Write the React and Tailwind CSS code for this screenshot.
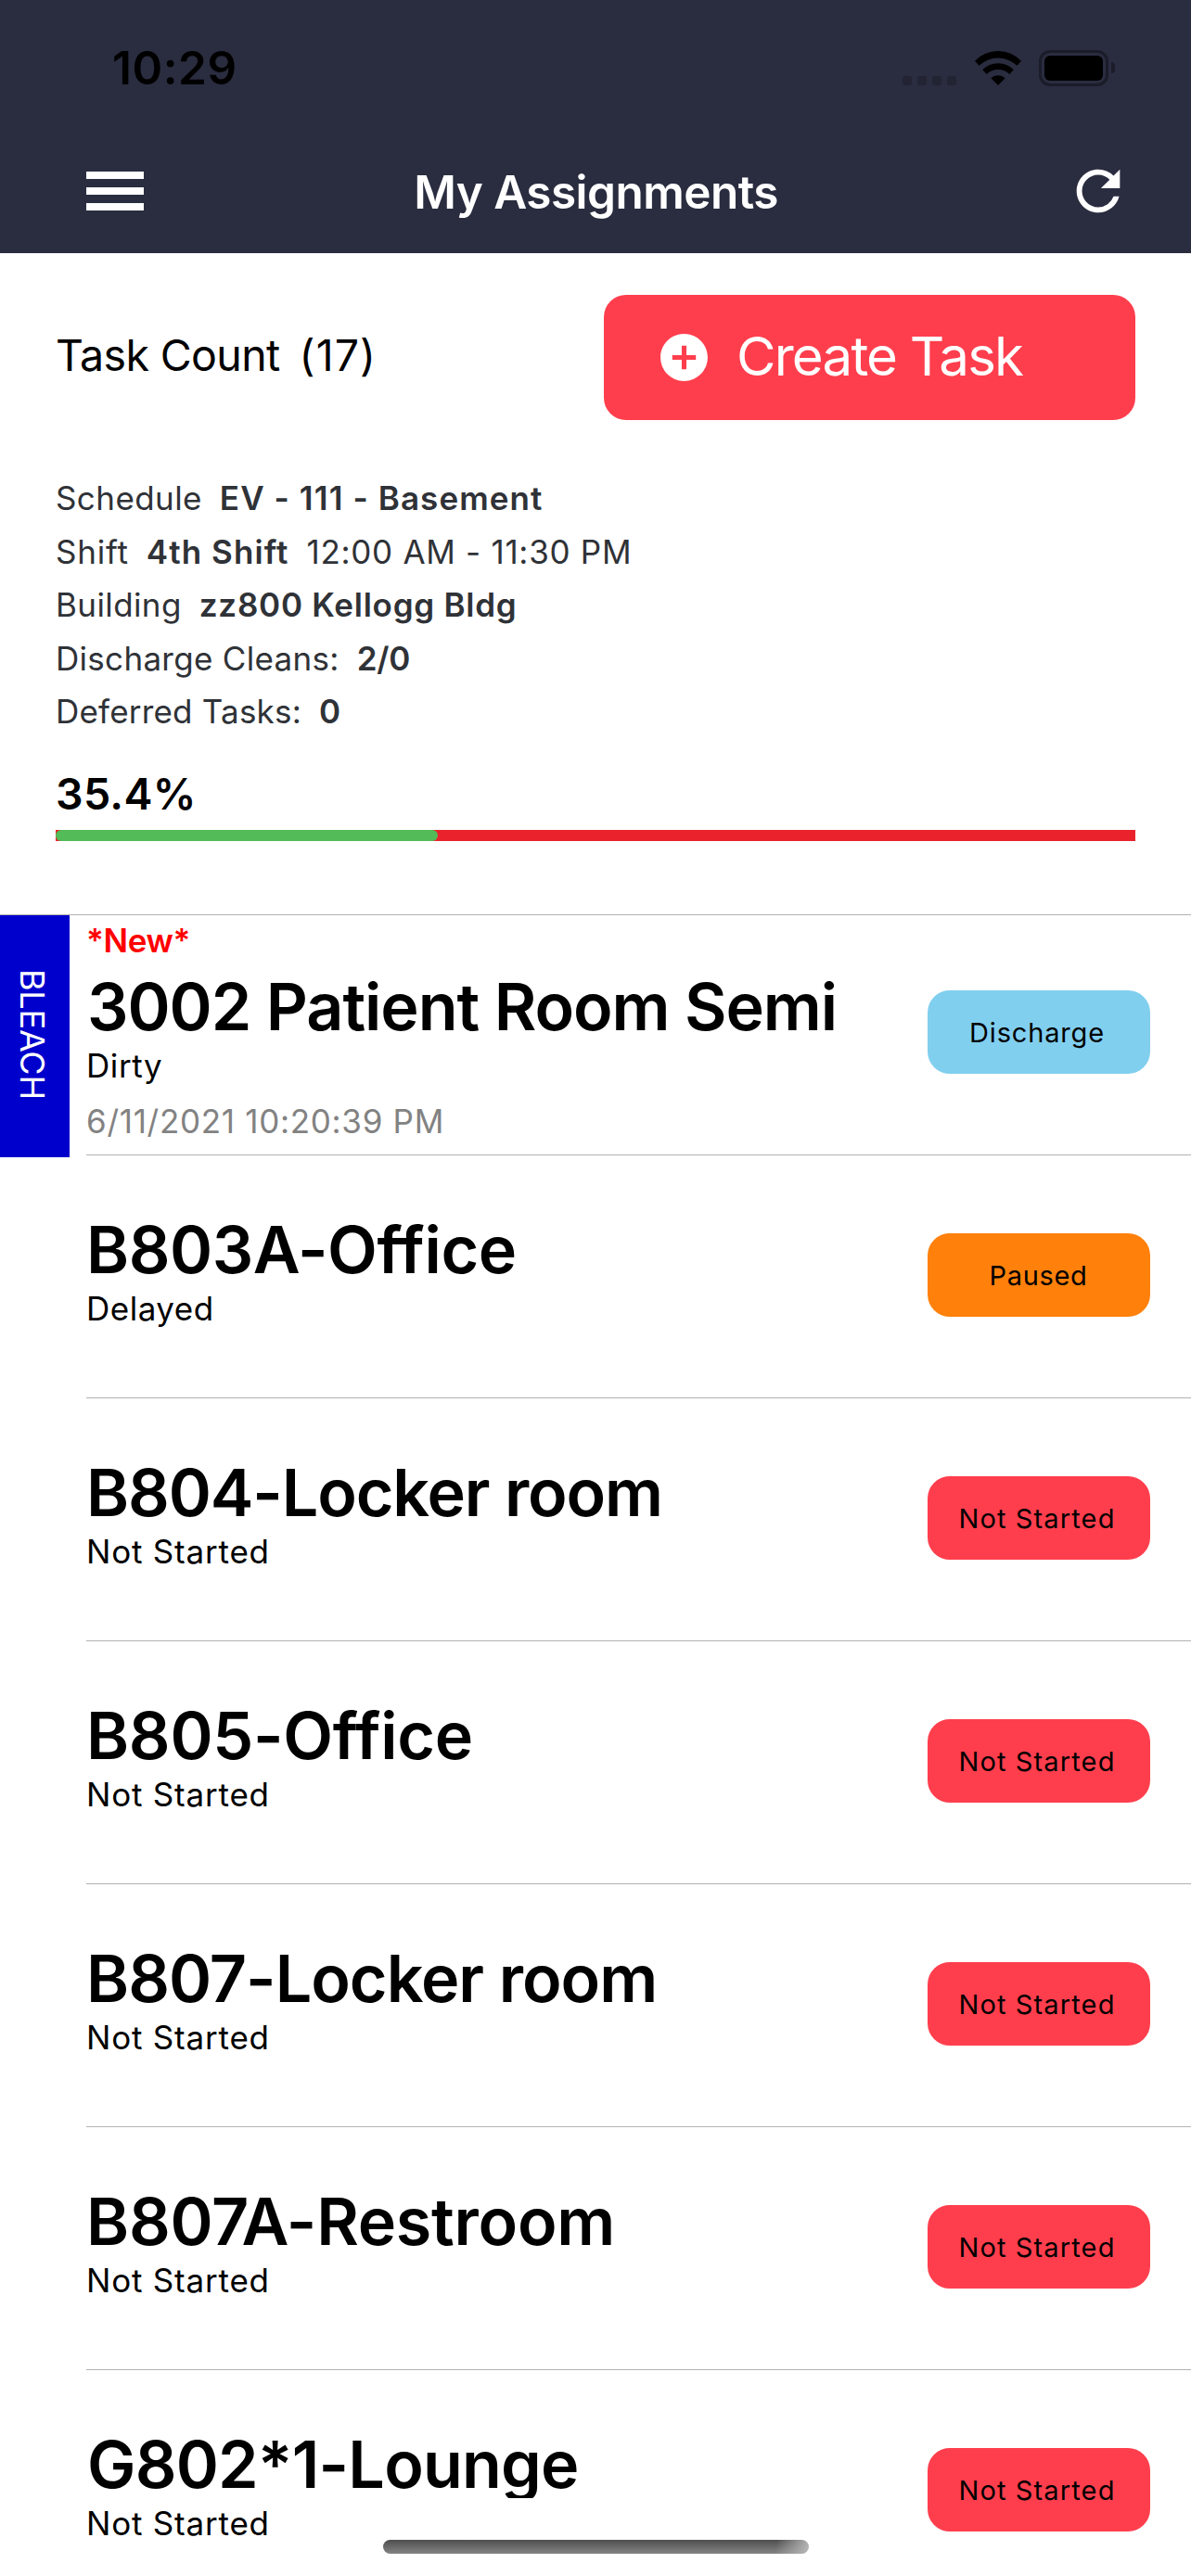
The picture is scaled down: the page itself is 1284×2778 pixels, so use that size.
import React from "react";
import { MdAddCircle, MdRefresh } from "react-icons/md";

const info = [
  [
    { text: "Schedule", style: "tracking-[0.41px]" },
    { text: "EV - 111 - Basement", style: "font-semibold tracking-[1.09px]" },
  ],
  [
    { text: "Shift", style: "tracking-[0.78px]" },
    { text: "4th Shift", style: "font-semibold tracking-[1.08px]" },
    { text: "12:00 AM - 11:30 PM", style: "tracking-[0.71px]" },
  ],
  [
    { text: "Building", style: "tracking-[0.4px]" },
    { text: "zz800 Kellogg Bldg", style: "font-semibold tracking-[0.75px]" },
  ],
  [
    { text: "Discharge Cleans:", style: "tracking-[0.3px]" },
    { text: "2/0", style: "font-semibold tracking-[-0.2px]" },
  ],
  [
    { text: "Deferred Tasks:", style: "tracking-[0.2px]" },
    { text: "0", style: "font-semibold" },
  ],
];

const badges = {
  Discharge: "bg-[#81cfef] tracking-[0.82px] pr-[4px]",
  Paused: "bg-[#ff800b] tracking-[0.68px] pr-px",
  "Not Started": "bg-[#ff3e4d] tracking-[1.13px] pr-[4px]",
};

const tasks = [
  {
    name: "3002 Patient Room Semi",
    tracking: "tracking-[-1.06px] pl-px",
    status: "Dirty",
    statusTracking: "tracking-[0.6px]",
    badge: "Discharge",
    isNew: true,
    time: "6/11/2021 10:20:39 PM",
    tag: "BLEACH",
  },
  { name: "B803A-Office", tracking: "tracking-[-0.45px]", status: "Delayed", statusTracking: "tracking-[0.5px]", badge: "Paused" },
  { name: "B804-Locker room", tracking: "tracking-[-1.12px]", status: "Not Started", badge: "Not Started" },
  { name: "B805-Office", tracking: "tracking-[-0.28px]", status: "Not Started", badge: "Not Started" },
  { name: "B807-Locker room", tracking: "tracking-[-1px]", status: "Not Started", badge: "Not Started" },
  { name: "B807A-Restroom", tracking: "tracking-[-0.25px]", status: "Not Started", badge: "Not Started" },
  { name: "G802*1-Lounge", tracking: "tracking-[-0.8px] overflow-hidden pl-px", status: "Not Started", badge: "Not Started" },
];

function StatusBar() {
  return (
    <div className="flex h-[146px] items-center justify-between pl-[121px] pr-[82px]">
      <span className="text-[49.5px] leading-[60px] font-semibold tracking-[0.57px] text-black">10:29</span>
      <div className="flex h-[39px] items-center">
        <div className="mt-[27px] flex gap-[6px]">
          {[0, 1, 2, 3].map((dot) => (
            <span key={dot} className="size-[10px] rounded-[3px] bg-[#222333]" />
          ))}
        </div>
        <svg className="ml-[20px] h-[37px] w-[50px]" viewBox="0 0 50 37" fill="#000">
          <path d="M0 10.7A34.6 34.6 0 0 1 50 10.7L45.5 15.7A30 30 0 0 0 4.5 15.7Z" />
          <path d="M8.2 20.2A23.7 23.7 0 0 1 41.8 20.2L37.3 25.1A17.6 17.6 0 0 0 12.7 25.1Z" />
          <path d="M17.4 29.2A11 11 0 0 1 32.6 29.2L25 37Z" />
        </svg>
        <div className="ml-[19px] flex h-[39px] w-[75px] rounded-[12px] border-[3px] border-[#1b1c2a] p-[3px]">
          <div className="flex-1 rounded-[6px] bg-black" />
        </div>
        <div className="ml-[3px] h-[12px] w-[4px] rounded-r-[4px] bg-[#1b1c2a]" />
      </div>
    </div>
  );
}

function NavBar() {
  return (
    <div className="flex h-[122px] items-center justify-between pl-[93px] pr-[65px]">
      <div className="flex w-[97px] flex-col gap-[9.6px] pb-[2px]">
        <span className="h-[7.6px] w-[62px] bg-white" />
        <span className="h-[7.6px] w-[62px] bg-white" />
        <span className="h-[7.6px] w-[62px] bg-white" />
      </div>
      <h1 className="pl-[1px] text-[49.5px] leading-[60px] font-semibold tracking-[-0.55px] text-white">My Assignments</h1>
      <div className="flex w-[125px] justify-end pb-[3px]">
        <MdRefresh className="size-[70px] text-white" />
      </div>
    </div>
  );
}

function Summary() {
  return (
    <section className="h-[711px] px-[60px] pt-[45px]">
      <div className="flex h-[135px] items-center justify-between">
        <div className="flex gap-[21px] pb-[5px] text-[46.5px] leading-[56px] text-black">
          <span className="tracking-[-0.63px]">Task Count</span>
          <span className="tracking-[1.1px]">(17)</span>
        </div>
        <button className="flex h-[135px] w-[573px] items-center gap-[26px] rounded-[24px] bg-[#ff3e4d] pl-[56px] text-white">
          <MdAddCircle className="size-[61px]" />
          <span className="pb-[3px] text-[58.2px] leading-[70px] tracking-[-1.8px]">Create Task</span>
        </button>
      </div>
      <div className="mt-[56px] text-[35px] leading-[57.6px] text-[#2f3237]">
        {info.map((line) => (
          <div key={line[0].text} className="flex gap-[19px]">
            {line.map((part) => (
              <span key={part.text} className={part.style}>
                {part.text}
              </span>
            ))}
          </div>
        ))}
      </div>
      <div className="mt-[29px] text-[46.5px] leading-[60px] font-semibold tracking-[0.33px] text-black">35.4%</div>
      <div className="mt-[9px] h-[12px] bg-[#e9222c]">
        <div className="h-full rounded-[6px] bg-[#53bb57]" style={{ width: "35.4%" }} />
      </div>
    </section>
  );
}

function TaskRow({ task }) {
  return (
    <li className="flex h-[262px]">
      <div className="w-[93px] shrink-0 pt-[3px]">
        {task.tag && (
          <div className="flex h-[261px] w-[75px] items-center justify-center bg-[#0000cc] pr-[5px] pb-[4px] text-[36px] leading-[44px] tracking-[-0.2px] text-white [writing-mode:vertical-rl]">
            {task.tag}
          </div>
        )}
      </div>
      <div className="flex flex-1 justify-between border-b border-[#b2b2b2] pt-[9px] pr-[44px]">
        <div className="text-[35px] leading-[42px] text-black">
          <div className="h-[42px] font-semibold tracking-[-0.38px] text-[#ff0000]">{task.isNew ? "*New*" : null}</div>
          <h2 className={`mt-[14px] h-[73px] text-[70px] leading-[73px] font-semibold whitespace-nowrap ${task.tracking}`}>
            {task.name}
          </h2>
          <div className={`mt-[6px] ${task.statusTracking ?? "tracking-[0.8px]"}`}>{task.status}</div>
          {task.time && <div className="mt-[18px] tracking-[0.7px] text-[#828282]">{task.time}</div>}
        </div>
        <div
          className={`mt-[75px] flex h-[90px] w-[240px] items-center justify-center rounded-[24px] pt-px text-[29px] text-black ${badges[task.badge]}`}
        >
          {task.badge}
        </div>
      </div>
    </li>
  );
}

export default function App() {
  return (
    <div className="relative h-[2778px] w-[1284px] overflow-hidden bg-white font-[Inter,sans-serif]">
      <header className="h-[273px] bg-[#2a2c3f]">
        <StatusBar />
        <NavBar />
      </header>
      <Summary />
      <ul className="relative">
        <li aria-hidden="true" className="absolute top-[2px] h-px w-full bg-[#b2b2b2]" />
        {tasks.map((task) => (
          <TaskRow key={task.name} task={task} />
        ))}
      </ul>
      <div className="absolute top-[2739px] left-[413px] h-[15px] w-[459px] rounded-[7.5px] bg-[linear-gradient(100deg,transparent_92%,#b8b8b8_100%),linear-gradient(#4e4e4e,#848484)]" />
    </div>
  );
}
